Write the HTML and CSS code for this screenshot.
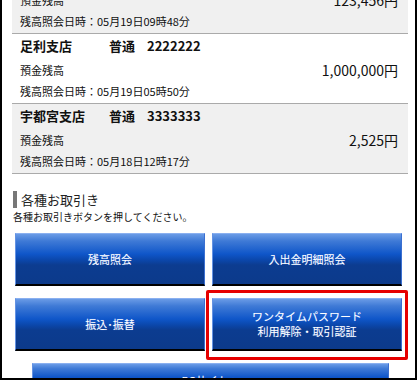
FILE: index.html
```html
<!DOCTYPE html>
<html lang="ja">
<head>
<meta charset="utf-8">
<link rel="stylesheet" href="styles.css">
</head>
<body>
<div class="frame">
  <div class="accounts">
    <div class="acct grey acct-partial">
      <div class="acct-bal"><span>預金残高</span><span class="amount">123,456円</span></div>
      <div class="acct-date">残高照会日時：05月19日09時48分</div>
    </div>
    <div class="acct">
      <div class="acct-title"><span class="branch">足利支店</span><span class="type">普通</span><span class="num">2222222</span></div>
      <div class="acct-bal"><span>預金残高</span><span class="amount">1,000,000円</span></div>
      <div class="acct-date">残高照会日時：05月19日05時50分</div>
    </div>
    <div class="acct grey">
      <div class="acct-title"><span class="branch">宇都宮支店</span><span class="type">普通</span><span class="num">3333333</span></div>
      <div class="acct-bal"><span>預金残高</span><span class="amount">2,525円</span></div>
      <div class="acct-date">残高照会日時：05月18日12時17分</div>
    </div>
  </div>

  <h2 class="section-title">各種お取引き</h2>
  <p class="section-note">各種お取引きボタンを押してください。</p>

  <div class="btn-grid">
    <a class="btn">残高照会</a>
    <a class="btn">入出金明細照会</a>
    <a class="btn">振込･振替</a>
    <div class="highlight-cell">
      <a class="btn">ワンタイムパスワード<br>利用解除・取引認証</a>
      <span class="highlight"></span>
    </div>
  </div>
  <a class="btn btn-wide">BCサイトへ</a>
</div>
</body>
</html>
```

FILE: styles.css
```css
html, body {
  margin: 0;
  padding: 0;
  background: #fff;
}
body {
  width: 420px;
  height: 380px;
  overflow: hidden;
  font-family: "Noto Sans CJK JP", "Liberation Sans", sans-serif;
  color: #111;
}
.frame {
  box-sizing: border-box;
  width: 417px;
  height: 380px;
  border-left: 2px solid #000;
  border-right: 2px solid #000;
  border-bottom: 2px solid #000;
  padding: 0 7px 0 10px;
  overflow: hidden;
}
.accounts {
  margin-top: -15px;
}
.acct {
  box-sizing: border-box;
  height: 70px;
  padding: 3px 10px 0 8px;
  border-bottom: 1px solid #aaa;
  background: #fff;
}
.acct.grey {
  background: #f0f0f0;
}
.acct.acct-partial {
  height: 49px;
  padding-top: 0;
}
.acct-title {
  display: flex;
  height: 18px;
  line-height: 18px;
  font-size: 13px;
  font-weight: bold;
}
.branch {
  width: 89px;
}
.type {
  width: 38px;
}
.acct-bal {
  display: flex;
  justify-content: space-between;
  align-items: center;
  height: 30px;
  font-size: 11px;
}
.amount {
  font-size: 14px;
}
.acct-date {
  height: 12px;
  line-height: 12px;
  font-size: 11px;
}
.section-title {
  margin: 17px 0 0 1px;
  padding-left: 4px;
  border-left: 4px solid #777;
  font-size: 13px;
  font-weight: normal;
  line-height: 17px;
  color: #222;
}
.section-note {
  margin: 2px 0 0 1px;
  font-size: 10px;
  line-height: 14px;
}
.btn-grid {
  display: grid;
  grid-template-columns: 190px 190px;
  column-gap: 7px;
  row-gap: 12px;
  margin: 9px 0 0 3px;
}
.btn {
  box-sizing: border-box;
  display: flex;
  align-items: center;
  justify-content: center;
  text-align: center;
  height: 53px;
  color: #fff;
  font-size: 11px;
  line-height: 15px;
  text-decoration: none;
  text-shadow: 0 0 1px rgba(120, 165, 255, 0.6);
  background: linear-gradient(to bottom, #6a9be6 0%, #3f7ad6 14%, #0f56c9 40%, #0b47ab 52%, #0c3c90 62%, #0c3a8b 100%);
  border-top: 1px solid #8ab0f0;
  border-left: 1px solid #6392e3;
  border-right: 1px solid #3b6fd0;
  border-bottom: 2px solid #000;
}
.highlight-cell {
  position: relative;
}
.highlight {
  position: absolute;
  top: -8px;
  left: -6px;
  right: -6px;
  bottom: -9px;
  border: 3px solid #e60000;
  border-radius: 2px;
}
.btn-wide {
  width: 357px;
  height: 36px;
  margin: 12px 0 0 20px;
}
```
